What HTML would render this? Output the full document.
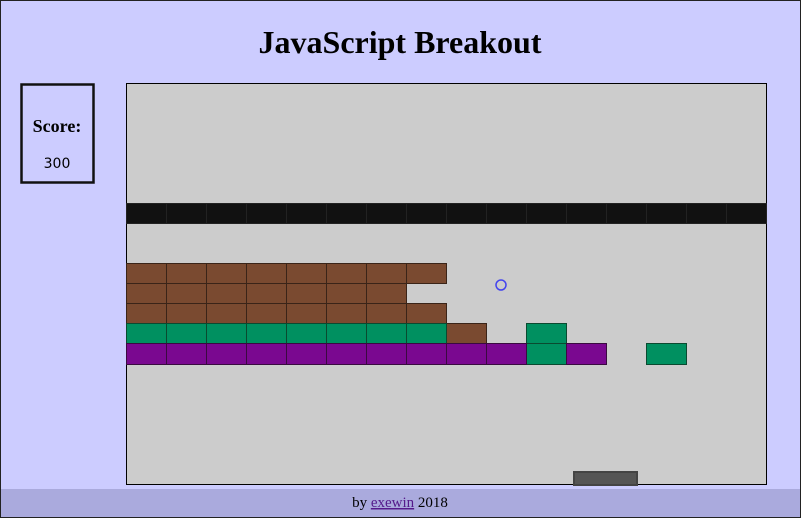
<!DOCTYPE html>
<html><head><style>
html,body{margin:0;padding:0;width:801px;height:518px;overflow:hidden;background:#ccccff;}
svg{display:block;}
</style></head><body>
<svg width="801" height="518" xmlns="http://www.w3.org/2000/svg" font-family="Liberation Serif, serif">
<rect x="0.5" y="0.5" width="800" height="517" fill="#ccccff" stroke="#222"/>
<text x="400" y="53" text-anchor="middle" font-size="32" font-weight="bold" fill="#000">JavaScript Breakout</text>
<rect x="21.5" y="84.5" width="72" height="98" fill="none" stroke="#111" stroke-width="2.5"/>
<text x="57" y="132" text-anchor="middle" font-size="18" font-weight="bold">Score:</text>
<text x="57" y="168" text-anchor="middle" font-size="14" font-family="DejaVu Sans, sans-serif">300</text>
<rect x="126.5" y="83.5" width="640" height="401" fill="#cccccc" stroke="#000"/>
<g stroke="#222" stroke-width="1">
<g fill="#111111">
<rect x="126.5" y="203.5" width="40" height="20"/><rect x="166.5" y="203.5" width="40" height="20"/><rect x="206.5" y="203.5" width="40" height="20"/><rect x="246.5" y="203.5" width="40" height="20"/><rect x="286.5" y="203.5" width="40" height="20"/><rect x="326.5" y="203.5" width="40" height="20"/><rect x="366.5" y="203.5" width="40" height="20"/><rect x="406.5" y="203.5" width="40" height="20"/><rect x="446.5" y="203.5" width="40" height="20"/><rect x="486.5" y="203.5" width="40" height="20"/><rect x="526.5" y="203.5" width="40" height="20"/><rect x="566.5" y="203.5" width="40" height="20"/><rect x="606.5" y="203.5" width="40" height="20"/><rect x="646.5" y="203.5" width="40" height="20"/><rect x="686.5" y="203.5" width="40" height="20"/><rect x="726.5" y="203.5" width="40" height="20"/>
</g>
</g>
<g stroke="#3a2418" fill="#7a4a30">
<rect x="126.5" y="263.5" width="40" height="20"/><rect x="166.5" y="263.5" width="40" height="20"/><rect x="206.5" y="263.5" width="40" height="20"/><rect x="246.5" y="263.5" width="40" height="20"/><rect x="286.5" y="263.5" width="40" height="20"/><rect x="326.5" y="263.5" width="40" height="20"/><rect x="366.5" y="263.5" width="40" height="20"/><rect x="406.5" y="263.5" width="40" height="20"/>
<rect x="126.5" y="283.5" width="40" height="20"/><rect x="166.5" y="283.5" width="40" height="20"/><rect x="206.5" y="283.5" width="40" height="20"/><rect x="246.5" y="283.5" width="40" height="20"/><rect x="286.5" y="283.5" width="40" height="20"/><rect x="326.5" y="283.5" width="40" height="20"/><rect x="366.5" y="283.5" width="40" height="20"/>
<rect x="126.5" y="303.5" width="40" height="20"/><rect x="166.5" y="303.5" width="40" height="20"/><rect x="206.5" y="303.5" width="40" height="20"/><rect x="246.5" y="303.5" width="40" height="20"/><rect x="286.5" y="303.5" width="40" height="20"/><rect x="326.5" y="303.5" width="40" height="20"/><rect x="366.5" y="303.5" width="40" height="20"/><rect x="406.5" y="303.5" width="40" height="20"/>
<rect x="446.5" y="323.5" width="40" height="20"/>
</g>
<g stroke="#0a4a30" fill="#009060">
<rect x="126.5" y="323.5" width="40" height="20"/><rect x="166.5" y="323.5" width="40" height="20"/><rect x="206.5" y="323.5" width="40" height="20"/><rect x="246.5" y="323.5" width="40" height="20"/><rect x="286.5" y="323.5" width="40" height="20"/><rect x="326.5" y="323.5" width="40" height="20"/><rect x="366.5" y="323.5" width="40" height="20"/><rect x="406.5" y="323.5" width="40" height="20"/>
<rect x="526.5" y="323.5" width="40" height="20"/><rect x="526.5" y="343.5" width="40" height="21"/><rect x="646.5" y="343.5" width="40" height="21"/>
</g>
<g stroke="#3a0a40" fill="#7a0890">
<rect x="126.5" y="343.5" width="40" height="21"/><rect x="166.5" y="343.5" width="40" height="21"/><rect x="206.5" y="343.5" width="40" height="21"/><rect x="246.5" y="343.5" width="40" height="21"/><rect x="286.5" y="343.5" width="40" height="21"/><rect x="326.5" y="343.5" width="40" height="21"/><rect x="366.5" y="343.5" width="40" height="21"/><rect x="406.5" y="343.5" width="40" height="21"/><rect x="446.5" y="343.5" width="40" height="21"/><rect x="486.5" y="343.5" width="40" height="21"/>
<rect x="566.5" y="343.5" width="40" height="21"/>
</g>
<circle cx="501" cy="285" r="5" fill="none" stroke="#4444ee" stroke-width="1.5"/>
<rect x="574" y="472" width="63" height="13" fill="#555" stroke="#444" stroke-width="2"/>
<rect x="1" y="489" width="799" height="28" fill="#aaaadd"/>
<text x="400" y="507" text-anchor="middle" font-size="15" fill="#000">by <tspan fill="#551a8b" text-decoration="underline">exewin</tspan> 2018</text>
<line x1="0" y1="517.5" x2="801" y2="517.5" stroke="#222"/>
</svg>
</body></html>
